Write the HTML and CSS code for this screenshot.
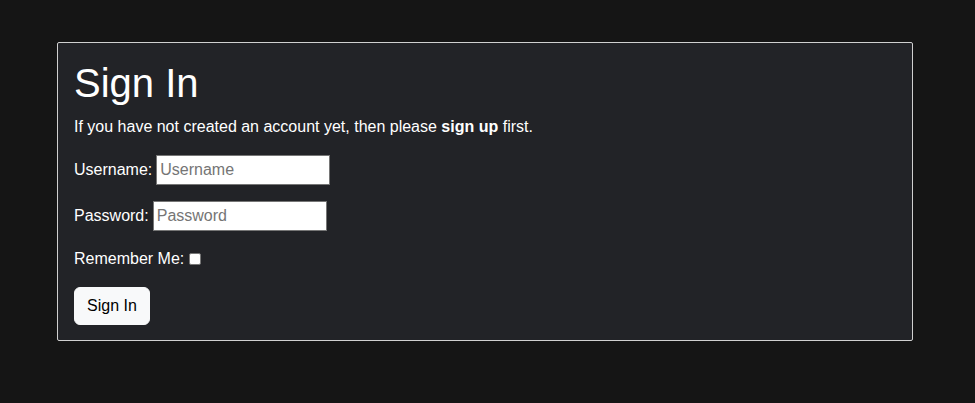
FILE: index.html
```html
<!DOCTYPE html>
<html lang="en">
<head>
<meta charset="utf-8">
<title>Sign In</title>
<link rel="stylesheet" href="styles.css">
</head>
<body>
<main class="page">
  <section class="card">
    <h1 class="title">Sign In</h1>
    <p class="intro">If you have not created an account yet, then please <a class="signup" href="#">sign up</a> first.</p>
    <form class="form">
      <div class="row">
        <label for="username">Username:</label>
        <input class="field field-user" id="username" type="text" placeholder="Username">
      </div>
      <div class="row">
        <label for="password">Password:</label>
        <input class="field" id="password" type="password" placeholder="Password">
      </div>
      <div class="row row-check">
        <label for="remember">Remember Me:</label>
        <input class="check" id="remember" type="checkbox">
      </div>
      <button class="btn" type="button">Sign In</button>
    </form>
  </section>
</main>
</body>
</html>
```
FILE: styles.css
```css
html, body {
  margin: 0;
  padding: 0;
  background: #151515;
}
body {
  font-family: "Liberation Sans", Arial, Helvetica, sans-serif;
  font-size: 16px;
  line-height: 24px;
  color: #ffffff;
}
.page {
  padding: 42px 62px 0 57px;
}
.card {
  background: #222327;
  border: 1px solid #d0d0d0;
  border-radius: 2px;
  padding: 16px 16px 15px 16px;
}
.title {
  margin: 0 0 8px 0;
  font-size: 40px;
  line-height: 48px;
  font-weight: 400;
}
.intro {
  margin: 0 0 16px 0;
}
.signup {
  color: #ffffff;
  font-weight: 700;
  text-decoration: none;
}
.form {
  margin: 0;
}
.row {
  display: flex;
  align-items: center;
  gap: 4px;
  height: 30px;
  margin-bottom: 16px;
}
.row-check {
  height: 24px;
  gap: 5px;
}
.field {
  box-sizing: border-box;
  width: 174px;
  height: 30px;
  margin: 0;
  padding: 1px 3px;
  border: 1px solid #767676;
  background: #ffffff;
  font-family: inherit;
  font-size: 16px;
  color: #000;
  border-radius: 0;
}
.field::placeholder {
  color: #757575;
}
.check {
  width: 12px;
  height: 12px;
  margin: 0;
  appearance: none;
  background: #ffffff;
  border: 1px solid #767676;
  border-radius: 2px;
  box-sizing: border-box;
}
.btn {
  display: block;
  box-sizing: border-box;
  height: 38px;
  padding: 6px 12px;
  border: 1px solid #f8f9fa;
  border-radius: 6px;
  background: #f8f9fa;
  color: #000;
  font-family: inherit;
  font-size: 16px;
  line-height: 24px;
}
```
